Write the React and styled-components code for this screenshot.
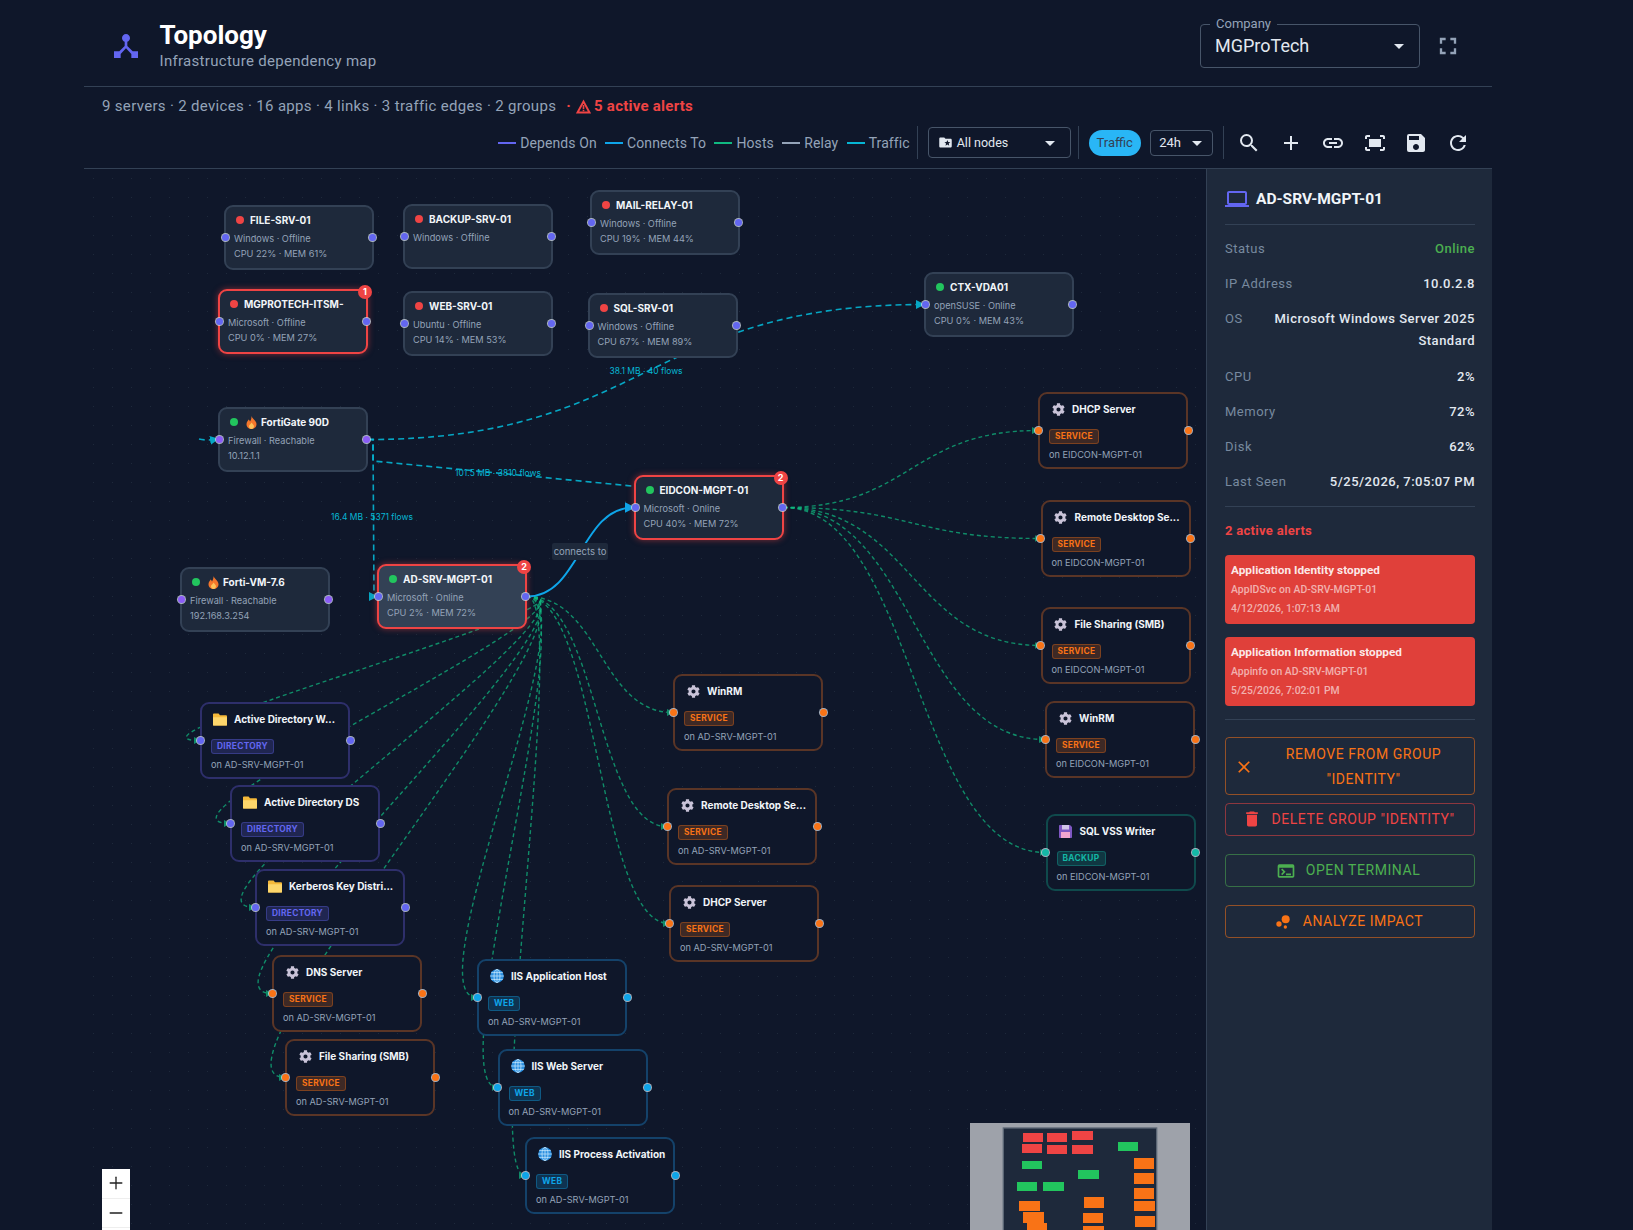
import React from 'react'
import styled, {createGlobalStyle} from 'styled-components'
import {
  MdDeviceHub, MdArrowDropDown, MdFullscreen, MdFolderSpecial, MdSearch, MdAdd, MdLink,
  MdFitScreen, MdSave, MdRefresh, MdLaptop, MdClose, MdDelete, MdTerminal, MdBubbleChart,
} from 'react-icons/md'
import {FaCog} from 'react-icons/fa'
import {Plus, Minus} from 'lucide-react'

const Global = createGlobalStyle`
  html, body { margin: 0; padding: 0; background: #0f172a; height: 100%; overflow: hidden; }
  body { font-family: Roboto, "Liberation Sans", sans-serif; color: #e2e8f0; }
  * { box-sizing: border-box; }
`

const Page = styled.div`
  width: 1408px;
  height: 100vh;
  margin-left: 84px;
  display: flex;
  flex-direction: column;
  overflow: hidden;
`
const Header = styled.header`
  height: 87px;
  flex: none;
  display: flex;
  align-items: center;
  padding: 5px 30px 0 26px;
  border-bottom: 1px solid #334155;
`
const Brand = styled.div`
  color: #6366f1;
  font-size: 32px;
  display: flex;
  margin-right: 17.5px;
`
const Title = styled.h1`
  margin: 0;
  font-size: 26px;
  line-height: 30px;
  font-weight: 700;
  color: #fff;
`
const Subtitle = styled.div`
  font-size: 15px;
  line-height: 20px;
  letter-spacing: 0.3px;
  color: #94a3b8;
  margin-top: 1px;
`
const CompanyBox = styled.div`
  position: relative;
  margin-left: auto;
  width: 220px;
  height: 44px;
  border: 1px solid #475569;
  border-radius: 4px;
  display: flex;
  align-items: center;
  justify-content: space-between;
  padding: 0 8px 0 14px;
  font-size: 18px;
  color: #e2e8f0;
`
const CompanyLabel = styled.span`
  position: absolute;
  top: -8px;
  left: 9px;
  padding: 0 6px;
  background: #0f172a;
  font-size: 13px;
  line-height: 14px;
  color: #94a3b8;
`
const Caret = styled(MdArrowDropDown)`
  color: #e2e8f0;
  font-size: 24px;
  flex: none;
`
const FullBtn = styled.div`
  display: flex;
  margin-left: 14px;
  font-size: 28px;
  color: #94a3b8;
`
const Stats = styled.div`
  height: 36px;
  flex: none;
  display: flex;
  align-items: center;
  padding: 2px 0 0 18px;
  font-size: 15px;
  letter-spacing: 0.32px;
  color: #94a3b8;
`
const AlertCount = styled.span`
  display: inline-flex;
  align-items: center;
  margin-left: 10px;
  color: #ef4444;
  font-weight: 700;
  letter-spacing: 0.25px;
  svg { margin: 0 3px 0 5px; }
`
const Toolbar = styled.div`
  height: 46px;
  flex: none;
  display: flex;
  align-items: center;
  justify-content: flex-end;
  gap: 9.5px;
  padding: 0 13px 6px 0;
  border-bottom: 1px solid #334155;
`
const Legend = styled.div`
  display: flex;
  align-items: center;
  gap: 8.3px;
  margin-right: -2px;
`
const LegendItem = styled.div`
  display: flex;
  align-items: center;
  gap: 4px;
  font-size: 14px;
  letter-spacing: 0.1px;
  color: #94a3b8;
  &::before {
    content: '';
    width: 18px;
    height: 2px;
    background: ${p => p.$color};
  }
`
const VDivider = styled.div`
  width: 1px;
  height: 33px;
  background: #334155;
`
const NodeSelect = styled.div`
  width: 143px;
  height: 31px;
  margin-right: -2px;
  border: 1px solid #475569;
  border-radius: 4px;
  display: flex;
  align-items: center;
  padding: 0 8px 0 9px;
  font-size: 12.5px;
  color: #e2e8f0;
  svg:first-child { font-size: 15px; margin-right: 4px; }
  span { flex: 1; }
`
const TrafficPill = styled.div`
  width: 52px;
  height: 26px;
  border-radius: 13px;
  background: #29b6f6;
  color: #334155;
  font-size: 13px;
  display: flex;
  align-items: center;
  justify-content: center;
`
const RangeSelect = styled.div`
  width: 63px;
  height: 26px;
  border: 1px solid #475569;
  border-radius: 4px;
  display: flex;
  align-items: center;
  justify-content: space-between;
  padding: 0 3px 0 8px;
  font-size: 13px;
  color: #e2e8f0;
`
const IconRow = styled.div`
  display: flex;
  margin-left: -5px;
`
const IconBtn = styled.div`
  width: 41.8px;
  height: 34px;
  display: flex;
  align-items: center;
  justify-content: center;
  font-size: 24px;
  color: #e2e8f0;
`
const Main = styled.div`
  flex: 1;
  display: flex;
  min-height: 0;
`
const Canvas = styled.div`
  position: relative;
  flex: 1;
  overflow: hidden;
  background-color: #0f172a;
  background-image: radial-gradient(circle, #1e293b 0.8px, transparent 1px);
  background-size: 19px 19px;
`
const EdgeLayer = styled.svg`
  position: absolute;
  inset: 0;
  width: 100%;
  height: 100%;
`
const HostPath = styled.path`
  fill: none;
  stroke: #10b981;
  stroke-width: 1.4;
  stroke-dasharray: 4 3;
  opacity: 0.72;
`
const TrafficPath = styled.path`
  fill: none;
  stroke: #06b6d4;
  stroke-width: 1.6;
  stroke-dasharray: 6 4;
  opacity: 0.9;
`
const LinkPath = styled.path`
  fill: none;
  stroke: #0ea5e9;
  stroke-width: 2;
`
const FlowLabel = styled.span.attrs(p => ({style: {left: p.$x, top: p.$y}}))`
  position: absolute;
  transform: translate(-50%, -50%);
  font-family: Inter, Roboto, sans-serif;
  font-size: 8.5px;
  white-space: nowrap;
  color: #06b6d4;
`
const EdgeTag = styled.span`
  position: absolute;
  left: 468px;
  top: 374px;
  width: 56px;
  height: 17px;
  border-radius: 2px;
  background: #1e293b;
  color: #94a3b8;
  font-family: Inter, Roboto, sans-serif;
  font-size: 9.5px;
  line-height: 17px;
  text-align: center;
`
const NodeBox = styled.div.attrs(p => ({style: {left: p.$x, top: p.$y, height: p.$h}}))`
  position: absolute;
  width: 150px;
  border: 2px solid ${p => p.$border};
  border-radius: 9px;
  background: ${p => p.$bg};
  padding: 5px 8px 0;
  font-family: Inter, Roboto, sans-serif;
  box-shadow: ${p => p.$alert ? '0 0 6px rgba(239, 68, 68, 0.5)' : 'none'};
`
const AppBox = styled(NodeBox)`
  padding: 7px 8px 0 9px;
`
const TitleRow = styled.div`
  display: flex;
  align-items: center;
  height: 16px;
  white-space: nowrap;
  font-size: 10px;
  font-weight: 700;
  color: #f1f5f9;
`
const Dot = styled.span`
  width: 8px;
  height: 8px;
  border-radius: 50%;
  margin: 0 6px 0 2px;
  background: ${p => p.$on ? '#22c55e' : '#ef4444'};
  flex: none;
`
const Lines = styled.div`
  margin-top: 3px;
  font-size: 9.2px;
  line-height: 15px;
  color: #94a3b8;
  white-space: nowrap;
`
const Emoji = styled.span`
  display: flex;
  align-items: center;
  justify-content: center;
  width: 14px;
  margin: 0 7px 0 2px;
  flex: none;
  color: ${p => p.$color};
`
const FireIcon = styled.span`
  display: flex;
  margin: 0 4px 0 2px;
`
const Badge = styled.div`
  display: inline-block;
  margin-top: 12px;
  height: 15px;
  padding: 0 5px;
  border-radius: 3px;
  border: 1px solid ${p => p.$color}55;
  background: ${p => p.$color}33;
  color: ${p => p.$color};
  font-size: 8.4px;
  line-height: 13px;
  font-weight: 700;
  letter-spacing: 0.3px;
`
const OnHost = styled.div`
  margin-top: 3px;
  font-size: 9.2px;
  line-height: 15px;
  color: #94a3b8;
`
const Handle = styled.i`
  position: absolute;
  top: 50%;
  ${p => p.$side}: ${p => p.$edge ? -5.5 : -4}px;
  width: 7px;
  height: 7px;
  margin-top: -3.5px;
  border-radius: 50%;
  background: ${p => p.$color};
  box-shadow: 0 0 0 1px #cbd5e1cc;
`
const CountBadge = styled.span`
  position: absolute;
  top: -6px;
  right: -6px;
  width: 14px;
  height: 14px;
  border-radius: 50%;
  background: #ef4444;
  color: #fff;
  font-size: 9px;
  font-weight: 700;
  line-height: 14px;
  text-align: center;
`
const MiniMap = styled.svg`
  position: absolute;
  right: 16px;
  top: 954px;
  width: 220px;
  height: 160px;
  background: #9ea2aa;
`
const ZoomBox = styled.div`
  position: absolute;
  left: 18px;
  top: 1000px;
  width: 28px;
  background: #fff;
  display: flex;
  flex-direction: column;
`
const ZoomBtn = styled.div`
  height: 29.5px;
  display: flex;
  align-items: center;
  justify-content: center;
  color: #222;
  border-bottom: 1px solid #eee;
`
const Side = styled.aside`
  width: 286px;
  flex: none;
  background: #1e293b;
  border-left: 1px solid #334155;
  padding: 18px 17px 0 18px;
`
const SideTitle = styled.div`
  display: flex;
  align-items: center;
  gap: 7px;
  height: 24px;
  font-size: 15.5px;
  font-weight: 700;
  color: #f1f5f9;
  svg { font-size: 24px; color: #6366f1; }
`
const Rule = styled.hr`
  border: 0;
  height: 1px;
  background: #334155;
  margin: ${p => p.$m || '13px 0'};
`
const Row = styled.div`
  display: flex;
  justify-content: space-between;
  gap: 24px;
  font-size: 13px;
  line-height: 22px;
  letter-spacing: 0.5px;
  color: #78899f;
  margin-bottom: 13.2px;
  &:last-of-type { margin-bottom: 0; }
`
const Value = styled.span`
  text-align: right;
  font-weight: 500;
  color: ${p => p.$color || '#e2e8f0'};
`
const AlertsHead = styled.div`
  font-size: 13px;
  line-height: 20px;
  font-weight: 700;
  letter-spacing: 0.3px;
  color: #ef4444;
  margin: 14px 0;
`
const AlertCard = styled.div`
  height: 68.7px;
  margin-bottom: 13.3px;
  padding: 6px 6px 0;
  border-radius: 4px;
  background: #e0403a;
  font-size: 10.4px;
  line-height: 19px;
  letter-spacing: 0.05px;
  color: rgba(255, 255, 255, 0.6);
  font-weight: 500;
`
const AlertTitle = styled.div`
  font-size: 11.8px;
  font-weight: 700;
  letter-spacing: 0;
  color: rgba(255, 255, 255, 0.9);
`
const ActionBtn = styled.div`
  display: flex;
  align-items: center;
  justify-content: center;
  gap: 10px;
  min-height: 33px;
  margin-top: ${p => p.$top}px;
  padding: ${p => p.$wide ? '4px 11px 2px 8px' : '3px 19px 3px 15px'};
  border: 1px solid ${p => p.$color}88;
  border-radius: 4px;
  color: ${p => p.$color};
  font-size: 14px;
  line-height: 25px;
  letter-spacing: 0.55px;
  text-align: center;
  svg { flex: none; font-size: 20px; }
  span { flex: ${p => p.$wide ? 1 : 'none'}; }
`

const WarnIcon = () => (
  <svg width="15" height="15" viewBox="0 0 24 24">
    <path d="M12 4L2.5 21.5h19z" fill="none" stroke="currentColor" strokeWidth="3" strokeLinejoin="miter" />
    <path d="M10.7 9.5h2.6v6.5h-2.6zM10.7 17h2.6v2.4h-2.6z" fill="currentColor" />
  </svg>
)
const Flame = () => (
  <svg width="11" height="13" viewBox="0 0 11 13">
    <path d="M5.5 0C6 2.5 10.5 4.5 10.5 8.2 10.5 11 8.2 13 5.5 13S.5 11 .5 8.2C.5 6 2 5 2.6 3.6 3.4 4.4 3.8 5 4 5.6 5 4 5.6 2 5.5 0z" fill="#f4762b" />
    <path d="M5.6 6.5C6.4 8 8 8.8 8 10.3 8 11.8 6.9 13 5.5 13S3 11.8 3 10.3C3 8.8 5 8 5.6 6.5z" fill="#fcc25a" />
  </svg>
)
const Folder = () => (
  <svg width="15" height="13" viewBox="0 0 15 13">
    <path d="M1 0h5l1.5 2H14c.6 0 1 .4 1 1v9c0 .6-.4 1-1 1H1c-.6 0-1-.4-1-1V1c0-.6.4-1 1-1z" fill="#f5b93a" />
    <path d="M0 4h15v8c0 .6-.4 1-1 1H1c-.6 0-1-.4-1-1z" fill="#fdd66b" />
  </svg>
)
const Floppy = () => (
  <svg width="13" height="13" viewBox="0 0 13 13">
    <path d="M0 1c0-.6.4-1 1-1h10l2 2v10c0 .6-.4 1-1 1H1c-.6 0-1-.4-1-1z" fill="#7e57c2" />
    <rect x="3" y="0" width="7" height="4.5" fill="#d1c4e9" />
    <rect x="2" y="7" width="9" height="6" fill="#f3a6d0" />
  </svg>
)
const Globe = () => (
  <svg width="14" height="14" viewBox="0 0 14 14">
    <circle cx="7" cy="7" r="6.8" fill="#2b8fe0" />
    <g fill="none" stroke="#bfe3fb" strokeWidth="0.8">
      <ellipse cx="7" cy="7" rx="3" ry="6.8" />
      <path d="M7 .2v13.6M.2 7h13.6M1.2 3.6h11.6M1.2 10.4h11.6" />
    </g>
  </svg>
)

const kinds = {
  service: {border: '#5a3526', color: '#f97316', label: 'SERVICE', icon: <FaCog size={13} />, iconColor: '#c9c3d8'},
  directory: {border: '#2e2f6b', color: '#6366f1', label: 'DIRECTORY', icon: <Folder />},
  web: {border: '#14426a', color: '#0ea5e9', label: 'WEB', icon: <Globe />},
  backup: {border: '#0f4a4c', color: '#14b8a6', label: 'BACKUP', icon: <Floppy />},
}

const servers = [
  {id: 'file', x: 140, y: 36, name: 'FILE-SRV-01', on: false, lines: ['Windows · Offline', 'CPU 22% · MEM 61%']},
  {id: 'backup', x: 319, y: 35, name: 'BACKUP-SRV-01', on: false, lines: ['Windows · Offline']},
  {id: 'mail', x: 506, y: 21, name: 'MAIL-RELAY-01', on: false, lines: ['Windows · Offline', 'CPU 19% · MEM 44%']},
  {id: 'itsm', x: 134, y: 120, name: 'MGPROTECH-ITSM-', on: false, alerts: 1, lines: ['Microsoft · Offline', 'CPU 0% · MEM 27%']},
  {id: 'web', x: 319, y: 122, name: 'WEB-SRV-01', on: false, lines: ['Ubuntu · Offline', 'CPU 14% · MEM 53%']},
  {id: 'sql', x: 503.5, y: 124, name: 'SQL-SRV-01', on: false, lines: ['Windows · Offline', 'CPU 67% · MEM 89%']},
  {id: 'ctx', x: 840, y: 103, name: 'CTX-VDA01', on: true, lines: ['openSUSE · Online', 'CPU 0% · MEM 43%']},
  {id: 'forti', x: 134, y: 238, name: 'FortiGate 90D', on: true, fire: true, lines: ['Firewall · Reachable', '10.12.1.1']},
  {id: 'fvm', x: 96, y: 398, name: 'Forti-VM-7.6', on: true, fire: true, lines: ['Firewall · Reachable', '192.168.3.254']},
  {id: 'ad', x: 293, y: 395, name: 'AD-SRV-MGPT-01', on: true, alerts: 2, selected: true, lines: ['Microsoft · Online', 'CPU 2% · MEM 72%']},
  {id: 'eid', x: 549.5, y: 306, name: 'EIDCON-MGPT-01', on: true, alerts: 2, lines: ['Microsoft · Online', 'CPU 40% · MEM 72%']},
]

const apps = [
  {id: 'adw', x: 116, y: 533, name: 'Active Directory W...', kind: 'directory', host: 'ad'},
  {id: 'adds', x: 146, y: 616, name: 'Active Directory DS', kind: 'directory', host: 'ad'},
  {id: 'kerb', x: 171, y: 700, name: 'Kerberos Key Distri...', kind: 'directory', host: 'ad'},
  {id: 'dns', x: 188, y: 786, name: 'DNS Server', kind: 'service', host: 'ad'},
  {id: 'smb', x: 201, y: 870, name: 'File Sharing (SMB)', kind: 'service', host: 'ad'},
  {id: 'iisapp', x: 393, y: 790, name: 'IIS Application Host', kind: 'web', host: 'ad'},
  {id: 'iisweb', x: 413.5, y: 880, name: 'IIS Web Server', kind: 'web', host: 'ad'},
  {id: 'iisproc', x: 441, y: 968, name: 'IIS Process Activation', kind: 'web', host: 'ad'},
  {id: 'winrm', x: 589, y: 505, name: 'WinRM', kind: 'service', host: 'ad'},
  {id: 'rdp', x: 583, y: 619, name: 'Remote Desktop Se...', kind: 'service', host: 'ad'},
  {id: 'dhcp', x: 585, y: 716, name: 'DHCP Server', kind: 'service', host: 'ad'},
  {id: 'rdhcp', x: 954, y: 223, name: 'DHCP Server', kind: 'service', host: 'eid'},
  {id: 'rrdp', x: 956.5, y: 331, name: 'Remote Desktop Se...', kind: 'service', host: 'eid'},
  {id: 'rsmb', x: 956.5, y: 438, name: 'File Sharing (SMB)', kind: 'service', host: 'eid'},
  {id: 'rwin', x: 961, y: 532, name: 'WinRM', kind: 'service', host: 'eid'},
  {id: 'rsql', x: 961.5, y: 645, name: 'SQL VSS Writer', kind: 'backup', host: 'eid'},
]

const hostNames = {ad: 'AD-SRV-MGPT-01', eid: 'EIDCON-MGPT-01'}

const serverById = id => servers.find(s => s.id === id)
const out = n => [n.x + 150, n.y + 32.5]
const into = (n, h) => [n.x, n.y + h / 2]

function bezier([sx, sy], [tx, ty]) {
  const d = tx - sx
  const c = d >= 0 ? d * 0.5 : 40 + 3.6 * Math.sqrt(-d)
  return `M${sx},${sy} C${sx + c},${sy} ${tx - c},${ty} ${tx},${ty}`
}

const miniRects = [
  ['#ef4444', 159, 30, 60, 27], ['#ef4444', 231, 30, 60, 27], ['#ef4444', 306, 24, 63, 27],
  ['#ef4444', 156, 63, 60, 27], ['#ef4444', 231, 66, 60, 27], ['#ef4444', 306, 66, 63, 27],
  ['#22c55e', 444, 57, 60, 27], ['#22c55e', 156, 114, 60, 24], ['#22c55e', 324, 141, 63, 27],
  ['#22c55e', 141, 177, 60, 27], ['#22c55e', 219, 177, 63, 27],
  ['#f97316', 492, 105, 60, 33], ['#f97316', 492, 150, 60, 33], ['#f97316', 492, 195, 60, 33],
  ['#f97316', 492, 234, 63, 30], ['#f97316', 495, 279, 60, 33], ['#f97316', 147, 234, 63, 30],
  ['#f97316', 159, 267, 63, 33], ['#f97316', 171, 300, 60, 33], ['#f97316', 342, 222, 60, 33],
  ['#f97316', 339, 270, 60, 30], ['#f97316', 339, 309, 63, 33],
]

function ServerNode({node}) {
  const handle = node.fire ? '#8b5cf6' : '#6366f1'
  return (
    <NodeBox
      $x={node.x} $y={node.y} $h={65} $alert={node.alerts}
      $border={node.alerts ? '#ef4444' : '#334155'}
      $bg={node.selected ? '#334155' : '#1e293b'}
    >
      <TitleRow>
        <Dot $on={node.on} />
        {node.fire && <FireIcon><Flame /></FireIcon>}
        {node.name}
      </TitleRow>
      <Lines>
        {node.lines.map(line => <div key={line}>{line}</div>)}
      </Lines>
      <Handle $side="left" $color={handle} />
      <Handle $side="right" $color={handle} />
      {node.alerts && <CountBadge>{node.alerts}</CountBadge>}
    </NodeBox>
  )
}

function AppNode({node}) {
  const kind = kinds[node.kind]
  return (
    <AppBox $x={node.x} $y={node.y} $h={77} $border={kind.border} $bg="#0f172a">
      <TitleRow>
        <Emoji $color={kind.iconColor}>{kind.icon}</Emoji>
        {node.name}
      </TitleRow>
      <Badge $color={kind.color}>{kind.label}</Badge>
      <OnHost>on {hostNames[node.host]}</OnHost>
      <Handle $side="left" $edge $color={kind.color} />
      <Handle $side="right" $edge $color={kind.color} />
    </AppBox>
  )
}

function Edges() {
  const forti = out(serverById('forti'))
  const ad = serverById('ad')
  const eid = serverById('eid')
  return (
    <EdgeLayer>
      <defs>
        <marker id="hostArrow" markerWidth="7" markerHeight="7" refX="6" refY="3.5" orient="auto" markerUnits="userSpaceOnUse">
          <path d="M0,0 L7,3.5 L0,7 z" fill="#10b981" />
        </marker>
        <marker id="trafficArrow" markerWidth="9" markerHeight="9" refX="8" refY="4.5" orient="auto" markerUnits="userSpaceOnUse">
          <path d="M0,0 L9,4.5 L0,9 z" fill="#06b6d4" />
        </marker>
        <marker id="linkArrow" markerWidth="11" markerHeight="11" refX="9" refY="5.5" orient="auto" markerUnits="userSpaceOnUse">
          <path d="M0,0 L11,5.5 L0,11 z" fill="#0ea5e9" />
        </marker>
      </defs>
      {apps.map(app => (
        <HostPath key={app.id} d={bezier(out(serverById(app.host)), into(app, 77))} markerEnd="url(#hostArrow)" />
      ))}
      <TrafficPath d={bezier(forti, into(serverById('ctx'), 65))} markerEnd="url(#trafficArrow)" />
      <TrafficPath d={`M${forti[0]},${forti[1]} L289,${forti[1]} L290,${ad.y + 32.5} L${ad.x},${ad.y + 32.5}`} markerEnd="url(#trafficArrow)" />
      <TrafficPath d={`M${forti[0]},${forti[1]} L289,${forti[1]} L289,292 L548,317`} />
      <TrafficPath d="M115,270 Q122,272 134,270" markerEnd="url(#trafficArrow)" />
      <LinkPath d={bezier(out(ad), into(eid, 65))} markerEnd="url(#linkArrow)" />
    </EdgeLayer>
  )
}

export default function App() {
  return (
    <Page>
      <Global />
      <Header>
        <Brand><MdDeviceHub /></Brand>
        <div>
          <Title>Topology</Title>
          <Subtitle>Infrastructure dependency map</Subtitle>
        </div>
        <CompanyBox>
          <CompanyLabel>Company</CompanyLabel>
          MGProTech
          <Caret />
        </CompanyBox>
        <FullBtn><MdFullscreen /></FullBtn>
      </Header>
      <Stats>
        9 servers · 2 devices · 16 apps · 4 links · 3 traffic edges · 2 groups
        <AlertCount>·<WarnIcon />5 active alerts</AlertCount>
      </Stats>
      <Toolbar>
        <Legend>
          <LegendItem $color="#6366f1">Depends On</LegendItem>
          <LegendItem $color="#0ea5e9">Connects To</LegendItem>
          <LegendItem $color="#10b981">Hosts</LegendItem>
          <LegendItem $color="#94a3b8">Relay</LegendItem>
          <LegendItem $color="#06b6d4">Traffic</LegendItem>
        </Legend>
        <VDivider />
        <NodeSelect>
          <MdFolderSpecial />
          <span>All nodes</span>
          <Caret />
        </NodeSelect>
        <VDivider />
        <TrafficPill>Traffic</TrafficPill>
        <RangeSelect>24h<Caret /></RangeSelect>
        <VDivider />
        <IconRow>
          <IconBtn><MdSearch /></IconBtn>
          <IconBtn><MdAdd /></IconBtn>
          <IconBtn><MdLink /></IconBtn>
          <IconBtn><MdFitScreen /></IconBtn>
          <IconBtn><MdSave /></IconBtn>
          <IconBtn><MdRefresh /></IconBtn>
        </IconRow>
      </Toolbar>
      <Main>
        <Canvas>
          <Edges />
          <FlowLabel $x={562} $y={202}>38.1 MB · 40 flows</FlowLabel>
          <FlowLabel $x={414} $y={304}>101.5 MB · 3810 flows</FlowLabel>
          <FlowLabel $x={288} $y={348}>16.4 MB · 5371 flows</FlowLabel>
          <EdgeTag>connects to</EdgeTag>
          {servers.map(node => <ServerNode key={node.id} node={node} />)}
          {apps.map(node => <AppNode key={node.id} node={node} />)}
          <MiniMap viewBox="0 0 660 480">
            <rect x="100" y="15" width="460" height="480" fill="#1e293b" stroke="#5b6675" strokeWidth="4" />
            {miniRects.map(([fill, x, y, w, h]) => (
              <rect key={`${x}-${y}`} x={x} y={y} width={w} height={h} fill={fill} />
            ))}
          </MiniMap>
          <ZoomBox>
            <ZoomBtn><Plus size={20} strokeWidth={1.6} /></ZoomBtn>
            <ZoomBtn><Minus size={20} strokeWidth={1.6} /></ZoomBtn>
            <ZoomBtn />
          </ZoomBox>
        </Canvas>
        <Side>
          <SideTitle><MdLaptop />AD-SRV-MGPT-01</SideTitle>
          <Rule />
          <Row>Status<Value $color="#4caf50">Online</Value></Row>
          <Row>IP Address<Value>10.0.2.8</Value></Row>
          <Row>OS<Value>Microsoft Windows Server 2025 Standard</Value></Row>
          <Row>CPU<Value>2%</Value></Row>
          <Row>Memory<Value>72%</Value></Row>
          <Row>Disk<Value>62%</Value></Row>
          <Row>Last Seen<Value>5/25/2026, 7:05:07 PM</Value></Row>
          <Rule />
          <AlertsHead>2 active alerts</AlertsHead>
          <AlertCard>
            <AlertTitle>Application Identity stopped</AlertTitle>
            <div>AppIDSvc on AD-SRV-MGPT-01</div>
            <div>4/12/2026, 1:07:13 AM</div>
          </AlertCard>
          <AlertCard>
            <AlertTitle>Application Information stopped</AlertTitle>
            <div>Appinfo on AD-SRV-MGPT-01</div>
            <div>5/25/2026, 7:02:01 PM</div>
          </AlertCard>
          <Rule $m="0 0 17px" />
          <ActionBtn $color="#f97316" $wide $top={0}><MdClose /><span>REMOVE FROM GROUP "IDENTITY"</span></ActionBtn>
          <ActionBtn $color="#ef4444" $top={7.6}><MdDelete /><span>DELETE GROUP "IDENTITY"</span></ActionBtn>
          <ActionBtn $color="#4caf50" $top={18.6}><MdTerminal /><span>OPEN TERMINAL</span></ActionBtn>
          <ActionBtn $color="#f97316" $top={17.6}><MdBubbleChart /><span>ANALYZE IMPACT</span></ActionBtn>
        </Side>
      </Main>
    </Page>
  )
}
